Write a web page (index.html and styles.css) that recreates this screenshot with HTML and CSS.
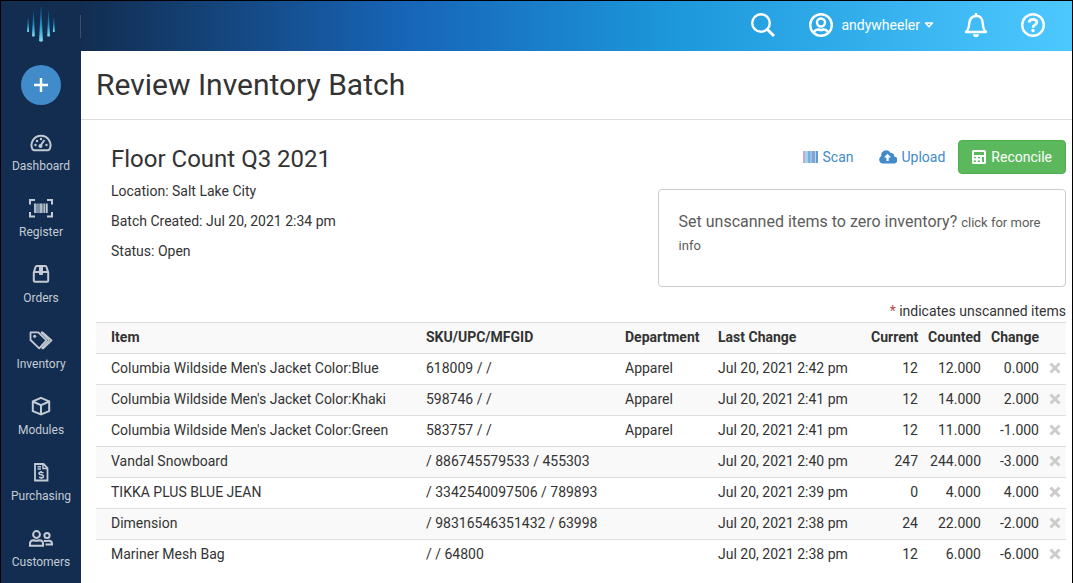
FILE: index.html
```html
<!DOCTYPE html>
<html lang="en">
<head>
<meta charset="utf-8">
<meta name="viewport" content="width=device-width, initial-scale=1">
<title>Review Inventory Batch</title>
<link rel="stylesheet" href="styles.css">
</head>
<body class="app">
<nav class="sidebar" aria-label="Main">
  <a class="brand" href="#" aria-label="Home">
    <svg width="30" height="36" viewBox="0 0 30 36">
      <defs><linearGradient id="beam" x1="0" y1="0" x2="0" y2="1"><stop offset="0" stop-color="#0d5f9c" stop-opacity=".7"/><stop offset=".5" stop-color="#1c8fc4"/><stop offset="1" stop-color="#7fdcf2"/></linearGradient></defs>
      <g fill="url(#beam)">
        <path d="M1.800 11h.7l.6 13.500q-1 1-2 0z"/>
        <path d="M7.200 5h.6l1 24q-1.400 1.200-2.800 0z"/>
        <path d="M14.700 0h.6l1.600 34q-1.900 1.600-3.800 0z"/>
        <path d="M22.200 5h.6l1.200 24q-1.400 1.200-2.800 0z"/>
        <path d="M27.500 11h.7l.6 13.500q-1 1-2 0z"/>
      </g>
    </svg>
  </a>
  <button class="add" type="button" aria-label="Add"><svg width="14" height="14" viewBox="0 0 14 14" stroke="#fff" stroke-width="2.400"><path d="M7 0v14M0 7h14"/></svg></button>
  <ul class="menu">
    <li><a href="#"><svg width="24" height="24" viewBox="0 0 24 24"><path d="M5 20.200h14a2 2 0 0 0 1.500-.8 9.500 9.500 0 1 0-17 0 2 2 0 0 0 1.500.8z"/><path d="m11.500 15.500 4-5.500" stroke-width="2"/><g fill="currentColor" stroke="none"><circle cx="11.500" cy="16" r="2"/><circle cx="6.500" cy="15" r="1.200"/><circle cx="8" cy="11" r="1.200"/><circle cx="12" cy="9" r="1.200"/><circle cx="17.500" cy="15" r="1.200"/></g></svg>Dashboard</a></li>
    <li><a href="#"><svg width="24" height="24" viewBox="0 0 24 24"><path stroke-width="2" d="M1 8.500V4h5M18 4h5v4.500M23 16v4.500h-5M6 20.500H1V16"/><path stroke-width="1.800" d="M6 7.500v9.500M12 7.500v9.500M17.800 7.500v9.500"/><path stroke-width="1.200" d="M8 7.500v9.500M10 7.500v9.500M14 7.500v9.500M15.700 7.500v9.500"/></svg>Register</a></li>
    <li><a href="#"><svg width="24" height="24" viewBox="0 0 24 24"><path d="M4.800 10.500 6.500 5q.3-.9 1.300-.9h8.400q1 0 1.300.9l1.700 5.500v8q0 1.300-1.300 1.300H6.100q-1.300 0-1.300-1.300zM5 10h14"/><path d="M10.500 4.500v8h3v-8z" fill="currentColor" stroke-width="1"/></svg>Orders</a></li>
    <li><a href="#"><svg width="24" height="24" viewBox="0 0 24 24" stroke-linejoin="round"><path stroke-width="1.800" d="M1.500 4.300h7.800l8.200 8-7.300 8L1.500 12zM12 4.300h1.500l9 8-8.300 8h-1.500"/><path stroke-width="1.500" d="m12 4.300 8 8-7.300 8"/><circle cx="5.700" cy="8.200" r="1.500" fill="currentColor" stroke="none"/></svg>Inventory</a></li>
    <li><a href="#"><svg width="24" height="24" viewBox="0 0 24 24"><path d="m12 3.800 8.200 3.500v9.800L12 20.500l-8.200-3.400V7.300zM3.800 7.500l8.200 3.600 8.200-3.600M12 11.100v9.400"/></svg>Modules</a></li>
    <li><a href="#"><svg width="24" height="24" viewBox="0 0 24 24"><path stroke-width="1.800" d="M6 4h8.500l4 4v12.500H6z"/><path stroke-width="1.500" d="M14 4v4.500h4.500M8.500 6.800h3.500M8.500 9h3.500"/><path stroke-width="1.500" d="M14.500 12.800q-4.500-1.500-4.500.5 0 1.300 2.300 1.500 2.200.4 2.200 1.700 0 2-4.500.8M12.300 11v1.500M12.300 17.500v1.500"/></svg>Purchasing</a></li>
    <li><a href="#"><svg width="24" height="24" viewBox="0 0 24 24"><circle cx="7.500" cy="8.500" r="3.400"/><path d="M1 19.800v-2q0-3.500 3.500-3.500 3 1 6 0 3.500 0 3.500 3.500v2z"/><circle cx="18" cy="9.500" r="2.600"/><path d="M14.800 14.700q3.200.8 5 0 3.200 0 3.200 3v.8h-6.500"/></svg>Customers</a></li>
  </ul>
</nav>
<header class="topbar">
  <button class="icon-btn search" type="button" aria-label="Search"><svg width="24" height="26" viewBox="0 0 24 26"><circle cx="10" cy="11" r="8.800"/><path stroke-width="3" d="m16.500 17.500 6.500 6.500"/></svg></button>
  <button class="icon-btn account" type="button"><svg width="24" height="24" viewBox="0 0 24 24"><circle cx="12" cy="12" r="10.800"/><circle cx="12" cy="9.500" r="4"/><path d="M4.800 19.200q2-3 4.700-2.700 2.500.9 5 0 2.700-.3 4.700 2.700"/></svg><span>andywheeler</span><svg width="10" height="6" viewBox="0 0 10 6"><path class="caret" d="M1.500 1h7L5 4.800z"/></svg></button>
  <button class="icon-btn bell" type="button" aria-label="Notifications"><svg width="24" height="26" viewBox="0 0 24 26"><path stroke-linejoin="round" d="M2 20q2.800-2.400 3.200-8Q5.500 4.500 12 4t6.800 8q.4 5.600 3.200 8zM12 1v3"/><path d="M8.800 22.200h6.400q-.7 3-3.200 3t-3.200-3z" fill="#fff" stroke="none"/></svg></button>
  <button class="icon-btn" type="button" aria-label="Help"><svg width="24" height="24" viewBox="0 0 24 24"><circle cx="12" cy="12" r="10.800"/><path class="question" d="M8 9.500q.5-3.200 4-3.200t3.900 2.900q0 1.600-1.800 2.500-2 1-2 3"/><circle cx="12" cy="17.500" r="1.700" fill="#fff" stroke="none"/></svg></button>
</header>
<main class="page">
  <div class="page-head"><h1>Review Inventory Batch</h1></div>
  <div class="content">
    <div class="summary">
      <section class="batch">
        <h2>Floor Count Q3 2021</h2>
        <p>Location: Salt Lake City</p>
        <p>Batch Created: Jul 20, 2021 2:34 pm</p>
        <p>Status: Open</p>
      </section>
      <section class="side">
        <div class="actions">
          <a class="btn" href="#"><svg width="15" height="12" viewBox="0 0 15 12"><path fill="#d3a5c4" d="M0 0h2v12H0z"/><path fill="#9fd3ef" d="M2 0h3v12H2z"/><path fill="#6fb3dd" d="M5 0h2v12H5z"/><path fill="#a6b9e0" d="M7 0h2v12H7z"/><path fill="#7ba6d6" d="M9 0h3v12H9z"/><path fill="#b5d8ee" d="M12 0h1v12h-1z"/><path fill="#659bd0" d="M13 0h2v12h-2z"/></svg>Scan</a>
          <a class="btn" href="#"><svg width="18" height="14" viewBox="0 0 18 14"><path fill="#428bca" fill-rule="evenodd" d="M4 13.500a4 4 0 0 1-1.700-7.500A5 5 0 0 1 11.700 3 3 3 0 0 1 15.200 6.500 3.500 3.500 0 0 1 14.500 13.500zM8.500 3.800 5 7.500h2.400V11h2.300V7.500H12z"/></svg>Upload</a>
          <button class="btn btn-success" type="button"><svg width="14" height="14" viewBox="0 0 14 14"><path fill="#fff" fill-rule="evenodd" d="M1.500 0h11Q14 0 14 1.500v11q0 1.500-1.500 1.500h-11Q0 14 0 12.500v-11Q0 0 1.500 0zM2 2v3h10V2zM2 7v1.300h2V7zM6 7v1.300h2V7zM10 7v5h2V7zM2 10.500V12h2v-1.500zM6 10.500V12h2v-1.500z"/></svg>Reconcile</button>
        </div>
        <div class="well"><p>Set unscanned items to zero inventory? <small>click for more info</small></p></div>
      </section>
    </div>
    <p class="note"><span class="star">*</span> indicates unscanned items</p>
    <table class="items">
      <colgroup><col><col class="c-sku"><col class="c-dept"><col class="c-last"><col class="c-current"><col class="c-counted"><col class="c-change"><col class="c-x"></colgroup>
      <thead><tr><th>Item</th><th>SKU/UPC/MFGID</th><th>Department</th><th>Last Change</th><th class="num">Current</th><th class="num">Counted</th><th class="num">Change</th><td></td></tr></thead>
      <tbody>
        <tr><td>Columbia Wildside Men's Jacket Color:Blue</td><td>618009 / /</td><td>Apparel</td><td>Jul 20, 2021 2:42 pm</td><td class="num">12</td><td class="num">12.000</td><td class="num">0.000</td><td><button class="remove" type="button" aria-label="Remove"></button></td></tr>
        <tr><td>Columbia Wildside Men's Jacket Color:Khaki</td><td>598746 / /</td><td>Apparel</td><td>Jul 20, 2021 2:41 pm</td><td class="num">12</td><td class="num">14.000</td><td class="num">2.000</td><td><button class="remove" type="button" aria-label="Remove"></button></td></tr>
        <tr><td>Columbia Wildside Men's Jacket Color:Green</td><td>583757 / /</td><td>Apparel</td><td>Jul 20, 2021 2:41 pm</td><td class="num">12</td><td class="num">11.000</td><td class="num">-1.000</td><td><button class="remove" type="button" aria-label="Remove"></button></td></tr>
        <tr><td>Vandal Snowboard</td><td>/ 886745579533 / 455303</td><td></td><td>Jul 20, 2021 2:40 pm</td><td class="num">247</td><td class="num">244.000</td><td class="num">-3.000</td><td><button class="remove" type="button" aria-label="Remove"></button></td></tr>
        <tr><td>TIKKA PLUS BLUE JEAN</td><td>/ 3342540097506 / 789893</td><td></td><td>Jul 20, 2021 2:39 pm</td><td class="num">0</td><td class="num">4.000</td><td class="num">4.000</td><td><button class="remove" type="button" aria-label="Remove"></button></td></tr>
        <tr><td>Dimension</td><td>/ 98316546351432 / 63998</td><td></td><td>Jul 20, 2021 2:38 pm</td><td class="num">24</td><td class="num">22.000</td><td class="num">-2.000</td><td><button class="remove" type="button" aria-label="Remove"></button></td></tr>
        <tr><td>Mariner Mesh Bag</td><td>/ / 64800</td><td></td><td>Jul 20, 2021 2:38 pm</td><td class="num">12</td><td class="num">6.000</td><td class="num">-6.000</td><td><button class="remove" type="button" aria-label="Remove"></button></td></tr>
      </tbody>
    </table>
  </div>
</main>
<svg width="0" height="0" class="defs" aria-hidden="true"><symbol id="cross" viewBox="0 0 12 12"><path d="m1.500 1.500 9 9m0-9-9 9" stroke="#ccc" stroke-width="3"/></symbol></svg>
<script src="icons.js"></script>
</body>
</html>
```

FILE: icons.js
```js
document.querySelectorAll('.remove').forEach(function (button) {
  button.innerHTML = '<svg width="12" height="12"><use href="#cross"/></svg>';
});
```

FILE: styles.css
```css
* { box-sizing: border-box; }
.app {
  margin: 0;
  min-height: 100vh;
  border: 1px solid #000;
  display: grid;
  grid-template-columns: 80px 1fr;
  grid-template-rows: 50px 1fr;
  font: 14px/20px Roboto, sans-serif;
  color: #333;
  background: #fff;
}
a { color: inherit; text-decoration: none; }
button { font: inherit; color: inherit; background: none; border: 0; padding: 0; cursor: pointer; }
svg { display: block; flex: none; }
h1, h2, p { margin: 0; font-weight: 400; }
.defs { position: absolute; }

.sidebar {
  grid-row: 1 / 3;
  background: #122d50;
  display: flex;
  flex-direction: column;
  align-items: center;
}
.brand {
  width: 100%;
  height: 50px;
  padding-top: 6px;
  display: flex;
  justify-content: center;
  background: linear-gradient(#3b506e, #3b506e) right / 1px 23px no-repeat;
}
.add {
  width: 40px;
  height: 40px;
  margin-top: 14px;
  border-radius: 50%;
  background: #428bca;
  display: grid;
  place-items: center;
}
.menu { list-style: none; margin: 25px 0 0; padding: 0; width: 100%; }
.menu a {
  height: 66px;
  display: flex;
  flex-direction: column;
  align-items: center;
  font-size: 12px;
  line-height: 24px;
  color: #c4cbd5;
}
.menu svg { fill: none; stroke: currentColor; stroke-width: 2; }

.topbar {
  background: linear-gradient(90deg, #122d50, #1765b8 33%, #1c98db 60%, #4dc8ff);
  display: flex;
  align-items: center;
  justify-content: flex-end;
  padding: 0 27px 2px 0;
  color: #fff;
}
.icon-btn svg { fill: none; stroke: #fff; stroke-width: 2.4px; }
.icon-btn .caret { stroke-width: 1.6px; stroke-linejoin: round; }
.icon-btn .question { stroke-width: 2.8px; }
.search { margin-right: 34px; }
.account { display: flex; align-items: center; margin-right: 30px; }
.account span { margin: 0 4px 0 8px; }
.bell { margin-right: 33px; }

.page { min-width: 0; }
.page-head { padding: 14px 15px; border-bottom: 1px solid #ddd; }
.page-head h1 { font-size: 30px; line-height: 40px; }
.content { padding: 20px 6px 12px 15px; }
.summary { display: grid; grid-template-columns: 11fr 8fr; }
.batch { padding-left: 15px; }
.batch h2 { font-size: 24px; line-height: 38px; margin-bottom: 3px; }
.batch p { margin-bottom: 10px; }
.actions { display: flex; justify-content: flex-end; }
.btn {
  display: flex;
  align-items: center;
  gap: 4px;
  padding: 6px 12px;
  border: 1px solid transparent;
  border-radius: 4px;
  color: #428bca;
}
.btn-success { background: #5cb85c; border-color: #4cae4c; color: #fff; padding: 6px 13px; gap: 5px; }
.well {
  margin-top: 15px;
  padding: 20px;
  border: 1px solid #ccc;
  border-radius: 4px;
  color: #5c5c5c;
  font-size: 16px;
  line-height: 23px;
}
.well p { margin-bottom: 10px; }
.well small { font-size: 13px; line-height: 16px; }
.note { text-align: right; margin: 14px 0 1px; }
.star { color: #b94a48; }

.items { width: 100%; table-layout: fixed; border-collapse: collapse; }
.items th, .items td { padding: 4px 5px 6px; border-top: 1px solid #ddd; text-align: left; white-space: nowrap; }
.items th:first-child, .items td:first-child { padding-left: 15px; }
.items .num { text-align: right; }
.items thead tr, .items tbody tr:nth-child(even) { background: #f9f9f9; }
.items th { font-weight: 700; }
.c-sku { width: 199px; }
.c-dept { width: 93px; }
.c-last { width: 153px; }
.c-current { width: 57px; }
.c-counted { width: 63px; }
.c-change { width: 58px; }
.c-x { width: 22px; }
.remove { display: block; }
```
